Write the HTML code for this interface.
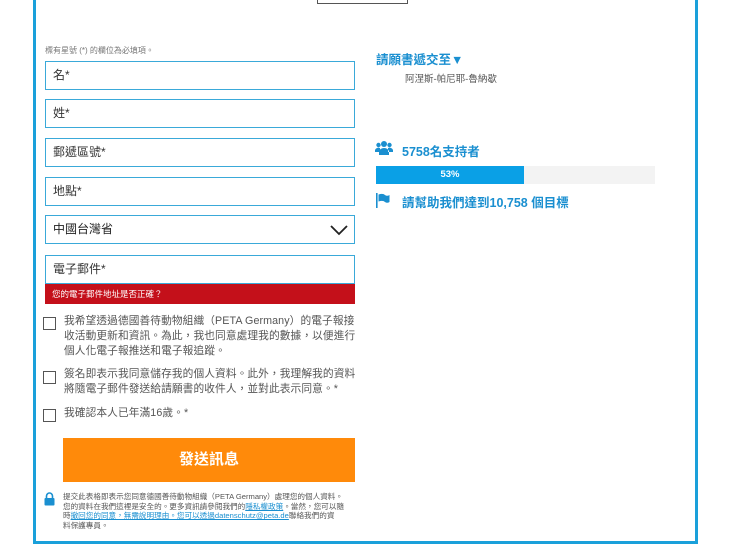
<!DOCTYPE html>
<html><head><meta charset="utf-8"><style>
body{margin:0;width:740px;height:553px;background:#fff;position:relative;overflow:hidden;font-family:"Liberation Sans","Noto Sans CJK TC",sans-serif;color:#444}
.a{position:absolute}
.in{position:absolute;left:45px;height:27px;border:1px solid #3aa9d9;font-size:12px;line-height:27px;padding-left:7px;box-sizing:content-box;width:301px;color:#333}
.cb{position:absolute;left:43px;width:11px;height:11px;border:1.5px solid #555;background:#fff}
.t{position:absolute;left:64px;font-size:10.7px;line-height:15px;color:#555;white-space:nowrap;letter-spacing:0.1px}
.b{color:#1a8fd0;font-weight:bold}
</style></head><body>
<div class="a" style="left:33px;top:0;width:659px;height:541px;border:3px solid #1aa0da;border-top:none"></div>
<div class="a" style="left:317px;top:-2px;width:89px;height:5px;border:1px solid #555;border-top:none"></div>
<div class="a" style="left:45px;top:45px;font-size:8px;color:#777">標有星號 (*) 的欄位為必填項。</div>
<div class="in" style="top:61px">名*</div>
<div class="in" style="top:99px">姓*</div>
<div class="in" style="top:138px">郵遞區號*</div>
<div class="in" style="top:177px">地點*</div>
<div class="in" style="top:215px;color:#222">中國台灣省
<svg class="a" style="left:284px;top:9px" width="18" height="11" viewBox="0 0 18 11"><path d="M1 1 L9 9 L17 1" fill="none" stroke="#222" stroke-width="1.8"/></svg></div>
<div class="in" style="top:255px">電子郵件*</div>
<div class="a" style="left:45px;top:284px;width:310px;height:20px;background:#c4101a;color:#fff;font-size:8.5px;line-height:20px;padding-left:7px;box-sizing:border-box">您的電子郵件地址是否正確？</div>
<div class="cb" style="top:317px"></div>
<div class="t" style="top:314px">我希望透過德國善待動物組織（PETA Germany）的電子報接<br>收活動更新和資訊。為此，我也同意處理我的數據，以便進行<br>個人化電子報推送和電子報追蹤。</div>
<div class="cb" style="top:371px"></div>
<div class="t" style="top:367px">簽名即表示我同意儲存我的個人資料。此外，我理解我的資料<br>將隨電子郵件發送給請願書的收件人，並對此表示同意。*</div>
<div class="cb" style="top:409px"></div>
<div class="t" style="top:406px">我確認本人已年滿16歲。*</div>
<div class="a" style="left:63px;top:438px;width:292px;height:44px;background:#ff8a0a;color:#fff;font-weight:bold;font-size:15px;line-height:44px;text-align:center">發送訊息</div>
<svg class="a" style="left:44px;top:492px" width="11" height="14" viewBox="0 0 11 14"><path d="M2.5 6 V4 a3 3 0 0 1 6 0 V6" fill="none" stroke="#1a8fd0" stroke-width="1.6"/><rect x="0.5" y="6" width="10" height="7.5" rx="1" fill="#1a8fd0"/></svg>
<div class="a" style="left:63px;top:492px;font-size:7.6px;line-height:9.7px;color:#555;white-space:nowrap">提交此表格即表示您同意德國善待動物組織（PETA Germany）處理您的個人資料。<br>您的資料在我們這裡是安全的。更多資訊請參閱我們的<u style="color:#1a8fd0">隱私權政策</u>。當然，您可以隨<br>時<u style="color:#1a8fd0">撤回您的同意，無需說明理由。您可以透過datenschutz@peta.de</u>聯絡我們的資<br>料保護專員。</div>
<div class="a b" style="left:376px;top:49px;font-size:12.5px">請願書遞交至▼</div>
<div class="a" style="left:405px;top:71px;font-size:9.5px;color:#555">阿涅斯-帕尼耶-魯納歇</div>
<svg class="a" style="left:375px;top:140px" width="18" height="15" viewBox="0 0 18 15"><circle cx="9" cy="4" r="3" fill="#1a8fd0"/><circle cx="3.5" cy="5" r="2.2" fill="#1a8fd0"/><circle cx="14.5" cy="5" r="2.2" fill="#1a8fd0"/><path d="M4 15 v-3 a5 4 0 0 1 10 0 v3z M0 12 v-2 a3.5 3 0 0 1 5 -2 v4z M18 12 v-2 a3.5 3 0 0 0 -5 -2 v4z" fill="#1a8fd0"/></svg>
<div class="a b" style="left:402px;top:141px;font-size:12.5px">5758名支持者</div>
<div class="a" style="left:376px;top:166px;width:279px;height:18px;background:#f3f3f3"></div>
<div class="a" style="left:376px;top:166px;width:148px;height:18px;background:#0aa0e6;color:#fff;font-weight:bold;font-size:9.5px;line-height:18px;text-align:center">53%</div>
<svg class="a" style="left:376px;top:193px" width="14" height="15" viewBox="0 0 14 15"><rect x="0" y="0" width="1.6" height="15" fill="#1a8fd0"/><path d="M2.5 1.5 Q7 0 9 2 Q11 3.5 13.5 2 V9 Q11 10.5 9 9 Q7 7 2.5 8.5z" fill="#1a8fd0"/></svg>
<div class="a b" style="left:402px;top:192px;font-size:12.5px">請幫助我們達到10,758 個目標</div>
</body></html>
